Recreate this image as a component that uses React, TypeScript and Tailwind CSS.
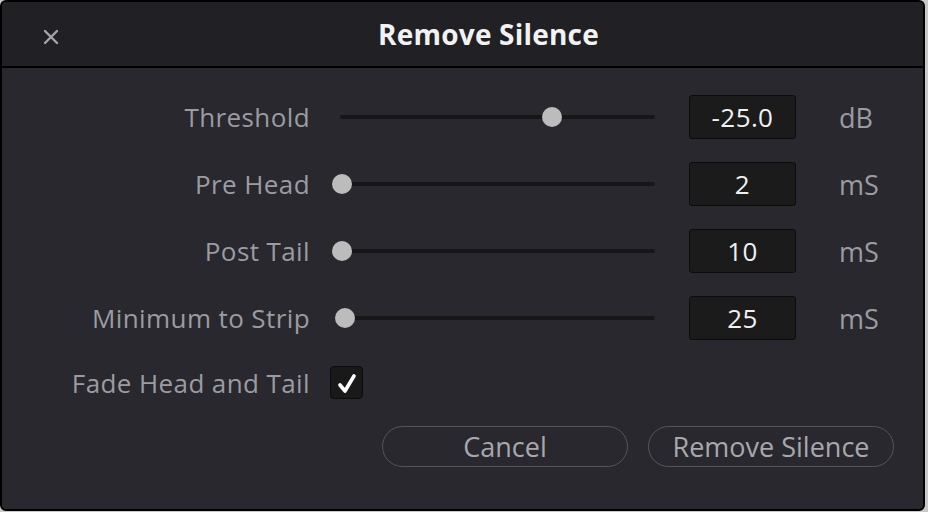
const rows = [
  { label: 'Threshold', value: '-25.0', unit: 'dB', knob: 212 },
  { label: 'Pre Head', value: '2', unit: 'mS', knob: 2 },
  { label: 'Post Tail', value: '10', unit: 'mS', knob: 2 },
  { label: 'Minimum to Strip', value: '25', unit: 'mS', knob: 5 },
]

function Slider({ knob }: { knob: number }) {
  return (
    <div className="relative ml-[30px] w-[315px] h-5 flex items-center">
      <div className="h-[4px] w-full bg-[#17171a] rounded-sm" />
      <div
        className="absolute top-0 w-5 h-5 rounded-full bg-[#bcbcbc]"
        style={{ left: knob - 10 }}
      />
    </div>
  )
}

export default function App() {
  return (
    <div
      className="w-[928px] h-[512px] bg-[#c9c9c9] overflow-hidden"
      style={{ fontFamily: '"Open Sans", "Noto Sans", sans-serif' }}
    >
      <div className="w-[925px] h-[511px] border-2 border-black rounded-[6px] bg-[#28282e] overflow-hidden flex flex-col">
        {/* header */}
        <div className="relative h-[66px] shrink-0 bg-[#202025] border-b-2 border-black flex items-center justify-center">
          <svg
            className="absolute left-[41px] top-[27px]"
            width="16"
            height="16"
            viewBox="0 0 16 16"
          >
            <path d="M2 2 L14 14 M14 2 L2 14" stroke="#a5a5a8" strokeWidth="2.4" strokeLinecap="round" />
          </svg>
          <span className="ml-[52px] text-[28px] font-bold text-[#f2f2f2] tracking-[0.2px] leading-none">Remove Silence</span>
        </div>

        {/* body */}
        <div className="flex flex-col pt-[27px]">
          {rows.map((r) => (
            <div key={r.label} className="flex items-center h-[44px] mb-[23px]">
              <div className="w-[308px] text-right text-[26px] tracking-[0.4px] text-[#9c9ca0] leading-none">{r.label}</div>
              <Slider knob={r.knob} />
              <div className="ml-[34px] w-[107px] h-[44px] rounded-[3px] bg-[#1b1b1c] border border-[#0c0c0c] flex items-center justify-center text-[26px] tracking-[0.4px] text-[#f0f0f0] leading-none">
                {r.value}
              </div>
              <div className="ml-[43px] text-[27px] text-[#9c9ca0] leading-none">{r.unit}</div>
            </div>
          ))}

          <div className="flex items-center h-[33px] mt-[3px]">
            <div className="w-[308px] text-right text-[26px] tracking-[0.4px] text-[#9c9ca0] leading-none">Fade Head and Tail</div>
            <div className="ml-[20px] w-[33px] h-[33px] rounded-[4px] bg-[#19191a] border border-[#0c0c0c] flex items-center justify-center">
              <svg width="24" height="24" viewBox="0 0 24 24">
                <path d="M5 14 L10 20 L19 5" fill="none" stroke="#ffffff" strokeWidth="3.6" strokeLinecap="round" strokeLinejoin="round" />
              </svg>
            </div>
          </div>

          <div className="flex justify-end gap-[20px] pr-[29px] mt-[27px]">
            <button className="w-[246px] h-[41px] rounded-full border border-[#55555b] text-[27px] text-[#a8a8ac] leading-none">
              Cancel
            </button>
            <button className="w-[246px] h-[41px] rounded-full border border-[#55555b] text-[27px] text-[#a8a8ac] leading-none">
              Remove Silence
            </button>
          </div>
        </div>
      </div>
    </div>
  )
}
